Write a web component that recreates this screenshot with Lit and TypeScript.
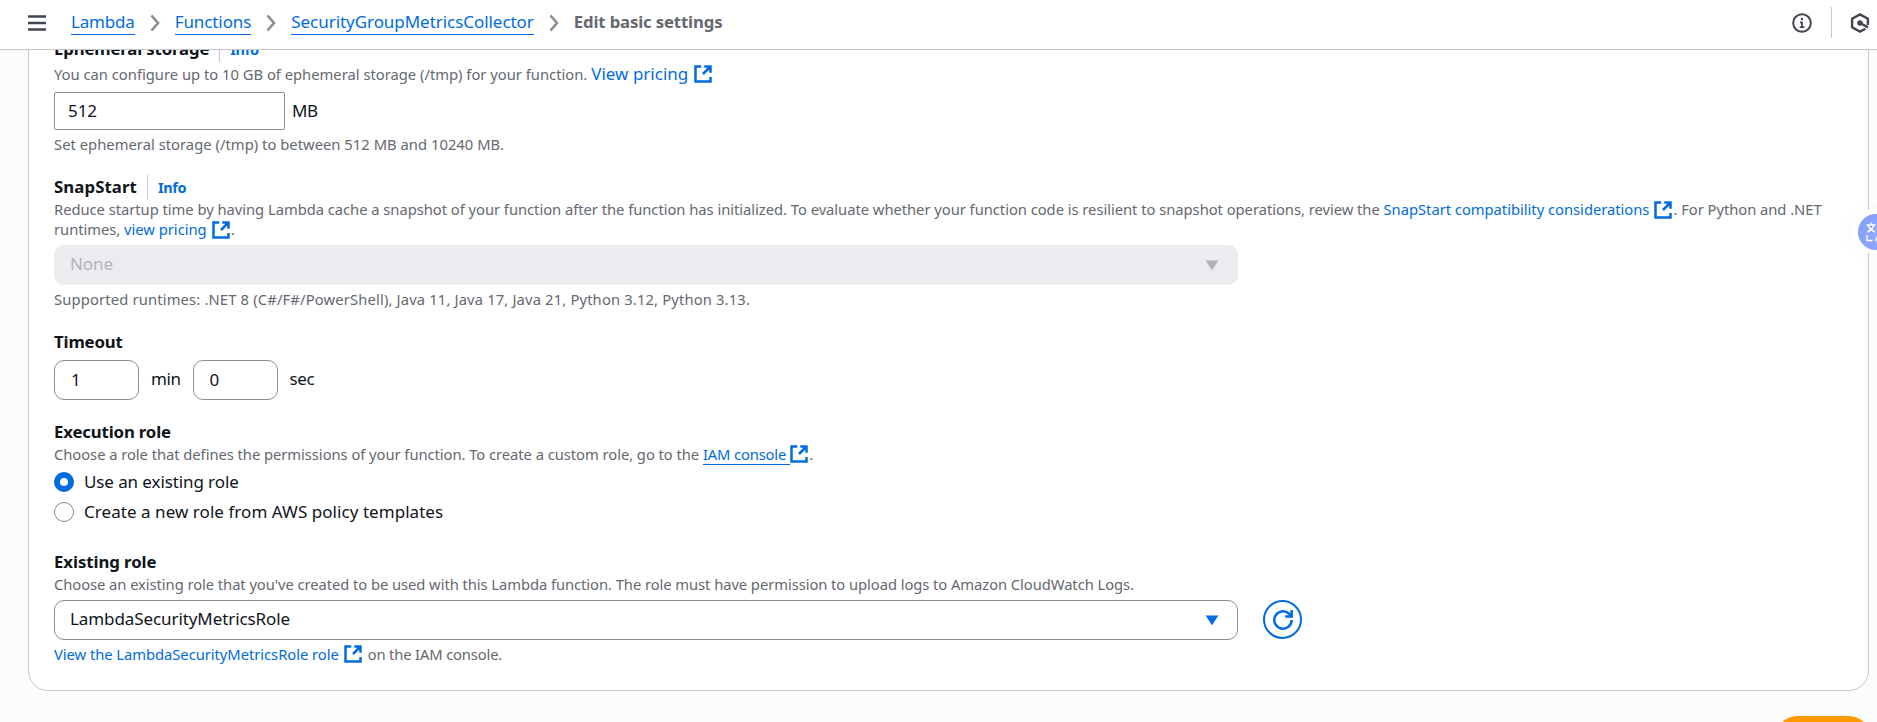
import { LitElement, html, css, svg, nothing } from "lit";
import { customElement } from "lit/decorators.js";

const externalIcon = html`<svg class="ext" viewBox="0 0 16 16" aria-hidden="true">
  <path d="M6.6 2H2v12h12v-3.6M9 2h5v5M14 2 8 8" />
</svg>`;

const chevron = html`<svg class="chevron" viewBox="0 0 10 18" aria-hidden="true">
  <path d="M1.5 1.5 8 9l-6.500 7.500" />
</svg>`;

const caret = svg`<path d="M0.600 0.600h12.800L7 10.200z" />`;

@customElement("app-root")
export class AppRoot extends LitElement {
  static styles = css`
    :host {
      display: flex;
      flex-direction: column;
      position: relative;
      width: 100%;
      height: 722px;
      overflow: hidden;
      box-sizing: border-box;
      background: #fcfcfd;
      color: #0f141a;
      font-family: "Noto Sans", "Open Sans", sans-serif;
      font-size: 17px;
      line-height: 25px;
      letter-spacing: -0.05px;
      white-space: nowrap;
    }
    * { box-sizing: border-box; }
    a { color: #006ce0; text-decoration: none; }
    svg { display: block; flex: none; fill: none; }

    .topbar {
      display: flex;
      align-items: center;
      flex: none;
      height: 50px;
      padding: 0 0 5px 28px;
      background: #fff;
      border-bottom: 1px solid #c6c6cd;
    }
    .menu { width: 18px; height: 16px; margin: 2px 25px 0 0; stroke: #424650; stroke-width: 2.600; }
    .crumb { height: 23px; line-height: 20px; margin-top: 3px; letter-spacing: -0.18px; border-bottom: 1px solid #006ce0; }
    .crumb-wide { letter-spacing: -0.05px; }
    .crumb-fn { letter-spacing: -0.1px; }
    .chevron { width: 10px; height: 18px; margin: 1px 15px 0; stroke: #8c8c94; stroke-width: 2.600; }
    .current { margin-top: -2px; color: #656871; font-weight: 700; font-size: 16.75px; letter-spacing: -0.15px; }
    .spacer { flex: 1; }
    .info-icon { width: 20px; height: 20px; margin-top: 1px; stroke: #424650; stroke-width: 2; }
    .rule { width: 1px; height: 31px; margin: 0 19px; background: #c6c6cd; }
    .hex-icon { width: 20px; height: 20px; margin: 1px 7px 0 -1px; stroke: #424650; stroke-width: 2.400; }
    .solid { fill: #424650; stroke: none; }

    main { flex: 1; min-height: 0; overflow: hidden; padding: 0 8px 0 28px; }
    .card {
      display: flex;
      flex-direction: column;
      margin-top: -20px;
      height: 661px;
      padding: 6px 25px 0;
      background: #fff;
      border: 1px solid #c6c6cd;
      border-radius: 20px;
    }
    .label {
      display: flex;
      align-items: center;
      flex: none;
      height: 25px;
      font-weight: 700;
      font-size: 16.75px;
      letter-spacing: -0.14px;
    }
    .label span { padding-bottom: 2px; }
    .label-loose { letter-spacing: 0.1px; }
    .label .info {
      height: 25px;
      margin-left: 10px;
      padding-left: 10px;
      border-left: 1px solid #c6c6cd;
      font-size: 14.5px;
      letter-spacing: -0.35px;
    }
    .hint { flex: none; height: 20px; font-size: 14.75px; line-height: 18px; letter-spacing: 0; color: #656871; }
    .row { display: flex; align-items: center; }
    .hint.row { padding-bottom: 2px; }
    .hint .ext { width: 20px; height: 20px; margin-left: 4px; stroke: #006ce0; stroke-width: 2; }
    .snap-hint .ext { display: inline-block; vertical-align: -1px; margin: -4px 0; margin-left: 4px; }
    .hint.storage-hint { height: 25px; }
    .pricing { margin-left: 4px; font-size: 17px; letter-spacing: 0; }
    .pricing + .ext { margin-left: 5px; }
    .storage-row { height: 38px; margin-top: 5px; gap: 7px; }
    .storage-row span, .timeout-row span { padding-bottom: 2px; letter-spacing: -0.4px; }
    .timeout-row span { padding-bottom: 4px; }
    .field {
      display: flex;
      align-items: center;
      background: #fff;
      border: 1px solid #8c8c94;
    }
    .storage-field { width: 231px; height: 38px; padding: 0 0 1px 13px; border-radius: 2px; }
    .limit { margin-top: 5px; letter-spacing: 0.03px; }
    .snap { margin-top: 20px; }
    .hint.snap-hint { height: 41px; margin-top: -1px; line-height: 20px; letter-spacing: -0.033px; }
    .snap-hint a { letter-spacing: -0.02px; }
    .select {
      display: flex;
      align-items: center;
      justify-content: space-between;
      width: 1184px;
      height: 40px;
      padding: 0 18px 0 15px;
      border: 1px solid #8c8c94;
      border-radius: 10px;
      background: #fff;
      letter-spacing: -0.09px;
    }
    .select span { padding-bottom: 4px; }
    .select.disabled { border-color: #ebebf0; background: #ebebf0; color: #b4b4bb; }
    .caret { width: 14px; height: 11px; fill: #006ce0; }
    .disabled .caret { fill: #b0b0b6; }
    .snap-select { margin-top: 5px; }
    .runtimes { margin-top: 5px; letter-spacing: 0.153px; }
    .timeout { margin-top: 20px; }
    .timeout-row { height: 40px; margin-top: 5px; gap: 12px; }
    .time-field { width: 85px; height: 40px; padding: 0 0 2px 16px; border-radius: 10px; }
    .execution { margin-top: 20px; }
    .exec-hint { letter-spacing: -0.045px; white-space: pre; }
    .underlined { height: 20px; margin-top: 2px; padding-right: 4px; border-bottom: 1px solid #006ce0; letter-spacing: -0.15px; }
    .hint .underlined + .ext { margin-left: -1px; }
    .radios { display: flex; flex-direction: column; gap: 5px; margin-top: 4px; }
    .radio { display: flex; align-items: center; height: 25px; gap: 10px; letter-spacing: 0.05px; }
    .radio-tight { letter-spacing: -0.1px; }
    .dot { width: 20px; height: 20px; margin-top: 1px; border: 1px solid #8c8c94; border-radius: 50%; }
    .dot.on { border: 6px solid #006ce0; }
    .existing { margin-top: 26px; letter-spacing: -0.06px; }
    .existing-hint { letter-spacing: -0.06px; }
    .role-row { align-items: flex-start; margin-top: 5px; gap: 25px; }
    .refresh {
      display: grid;
      place-items: center;
      width: 39px;
      height: 39px;
      border: 2px solid #006ce0;
      border-radius: 50%;
    }
    .refresh svg { width: 20px; height: 20px; stroke: #006ce0; stroke-width: 2.500; }
    .view-role { margin-top: 5px; letter-spacing: -0.04px; }
    .after { margin-left: 5px; letter-spacing: -0.15px; }

    .save {
      position: absolute;
      right: 8px;
      top: 715.500px;
      width: 92px;
      height: 40px;
      border-radius: 20px;
      background: #ff9900;
    }
    .translate {
      position: absolute;
      left: 1851px;
      top: 209px;
      width: 50px;
      height: 45px;
      padding: 5px 0 0 7px;
      border-radius: 23px 0 0 23px;
      background: #fff;
      box-shadow: 0 0 14px rgba(0, 0, 0, 0.04);
    }
    .bubble { width: 36px; height: 36px; border-radius: 50%; background: radial-gradient(circle at 55% 55%, #96aaff, #7d9bfb); }
    .bubble svg { width: 36px; height: 36px; stroke: #fff; stroke-width: 1.400; }
  `;

  private label(text: string, cls = "", info = false) {
    return html`<div class="label ${cls}">
      <span>${text}</span>${info ? html`<a class="info">Info</a>` : nothing}
    </div>`;
  }

  render() {
    return html`
      <header class="topbar">
        <svg class="menu" viewBox="0 0 18 16"><path d="M0 1.500h18M0 8h18M0 14.500h18" /></svg>
        <a class="crumb">Lambda</a>${chevron}
        <a class="crumb crumb-fn">Functions</a>${chevron}
        <a class="crumb crumb-wide">SecurityGroupMetricsCollector</a>${chevron}
        <span class="current">Edit basic settings</span>
        <span class="spacer"></span>
        <svg class="info-icon" viewBox="0 0 20 20">
          <circle cx="10" cy="10" r="8.800" />
          <path d="M10 8.800v5.700M8 9.400h2M7.800 14.200h4.600" stroke-width="1.800" />
          <path class="solid" d="M8.900 5h2.200v2.200H8.900z" />
        </svg>
        <span class="rule"></span>
        <svg class="hex-icon" viewBox="0 0 20 20">
          <path d="M17.900 12V5.600L10 1.400 2.100 5.600v8.800L10 18.600l5.500-2.900M10 10l8 4.400" />
          <circle class="solid" cx="10" cy="10" r="2.800" />
        </svg>
      </header>

      <main>
        <section class="card">
          ${this.label("Ephemeral storage", "", true)}
          <div class="hint row storage-hint">
            <span>You can configure up to 10 GB of ephemeral storage (/tmp) for your function.</span>
            <a class="pricing">View pricing</a>${externalIcon}
          </div>
          <div class="row storage-row">
            <div class="field storage-field">512</div>
            <span>MB</span>
          </div>
          <div class="hint limit">Set ephemeral storage (/tmp) to between 512 MB and 10240 MB.</div>

          ${this.label("SnapStart", "snap label-loose", true)}
          <div class="hint snap-hint">Reduce startup time by having Lambda cache a snapshot of your function after the function has initialized. To evaluate whether your function code is resilient to snapshot operations, review the <a>SnapStart compatibility considerations${externalIcon}</a>. For Python and .NET<br />runtimes, <a>view pricing${externalIcon}</a>.</div>
          <div class="select disabled snap-select">
            <span>None</span><svg class="caret" viewBox="0 0 14 11">${caret}</svg>
          </div>
          <div class="hint runtimes">Supported runtimes: .NET 8 (C#/F#/PowerShell), Java 11, Java 17, Java 21, Python 3.12, Python 3.13.</div>

          ${this.label("Timeout", "timeout")}
          <div class="row timeout-row">
            <div class="field time-field">1</div>
            <span>min</span>
            <div class="field time-field">0</div>
            <span>sec</span>
          </div>

          ${this.label("Execution role", "execution")}
          <div class="hint row exec-hint"><span>Choose a role that defines the permissions of your function. To create a custom role, go to the </span><a class="underlined">IAM console</a>${externalIcon}<span>.</span></div>
          <div class="radios">
            <div class="radio radio-tight"><span class="dot on"></span><span>Use an existing role</span></div>
            <div class="radio"><span class="dot"></span><span>Create a new role from AWS policy templates</span></div>
          </div>

          ${this.label("Existing role", "existing")}
          <div class="hint existing-hint">Choose an existing role that you've created to be used with this Lambda function. The role must have permission to upload logs to Amazon CloudWatch Logs.</div>
          <div class="row role-row">
            <div class="select">
              <span>LambdaSecurityMetricsRole</span><svg class="caret" viewBox="0 0 14 11">${caret}</svg>
            </div>
            <div class="refresh">
              <svg viewBox="0 0 20 20"><path d="M18.700 10a8.700 8.700 0 1 1-2.900-6.500l2 2.200M18.700 0v6.500h-6.500" /></svg>
            </div>
          </div>
          <div class="hint row view-role"><a>View the LambdaSecurityMetricsRole role</a>${externalIcon}<span class="after">on the IAM console.</span></div>
        </section>
      </main>

      <div class="save"></div>
      <div class="translate">
        <div class="bubble">
          <svg viewBox="0 0 36 36">
            <path d="M8.500 11h9M13 8.500V11M9.500 18c3-1.500 5.500-4 6.500-7M10 11c1 3 3.500 5.500 7 7M9 21v5.500h5.500M17.500 27l3-7 3 7M18.500 25h4" />
          </svg>
        </div>
      </div>
    `;
  }
}
